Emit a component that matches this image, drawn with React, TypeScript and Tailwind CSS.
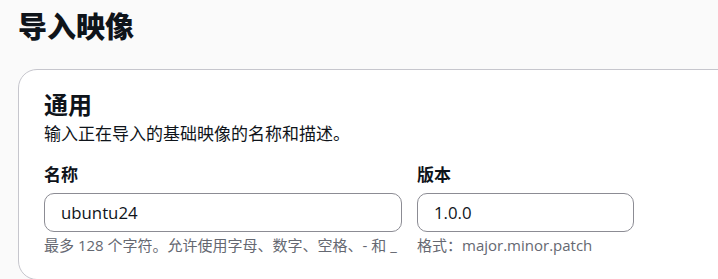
import React from 'react';

const font = { fontFamily: '"Open Sans", "Noto Sans CJK SC", sans-serif' };

export default function App() {
  return (
    <div className="bg-[#fafafa] h-[279px] overflow-hidden text-[#0f141a]" style={font}>
      <h1 className="px-[18px] pt-[9px] text-[29px] leading-[36px] font-black">导入映像</h1>

      <section className="mt-[24px] ml-[18px] mr-[-24px] bg-white border border-[#c6c6cd] rounded-[19px] px-[25px] pt-[20px] pb-6">
        <h2 className="text-[24px] leading-[30px] font-bold">通用</h2>
        <p className="text-[17px] leading-[24px] mt-[2px]">输入正在导入的基础映像的名称和描述。</p>

        <div className="flex gap-[15px] mt-[18px]">
          <div className="w-[358px]">
            <label className="block text-[17px] leading-[22px] font-bold">名称</label>
            <input
              className="mt-[7px] w-full h-[39px] px-[16px] rounded-[10px] border border-[#8c8c94] text-[16.8px] outline-none"
              style={font}
              defaultValue="ubuntu24"
            />
            <p className="mt-[3px] text-[15px] leading-[20px] text-[#656871] whitespace-nowrap">最多 128 个字符。允许使用字母、数字、空格、- 和 _</p>
          </div>
          <div className="w-[217px]">
            <label className="block text-[17px] leading-[22px] font-bold">版本</label>
            <input
              className="mt-[7px] w-full h-[39px] px-[16px] rounded-[10px] border border-[#8c8c94] text-[16.8px] outline-none"
              style={font}
              defaultValue="1.0.0"
            />
            <p className="mt-[3px] text-[15px] leading-[20px] text-[#656871]">格式：major.minor.patch</p>
          </div>
        </div>
      </section>
    </div>
  );
}
